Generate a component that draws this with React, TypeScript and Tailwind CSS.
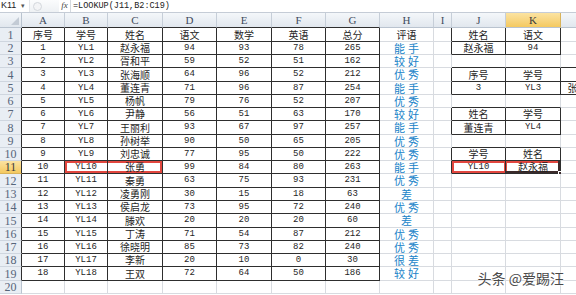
const COLS = ['A', 'B', 'C', 'D', 'E', 'F', 'G', 'H', 'I', 'J', 'K', 'L'];

const WIDTHS = [
  'w-[43px]', 'w-[43px]', 'w-[55px]', 'w-[54px]', 'w-[55px]', 'w-[54px]',
  'w-[54px]', 'w-[54px]', 'w-[18px]', 'w-[54px]', 'w-[55px]', 'w-[44px]',
];

const HEIGHTS = [
  'h-[14px]', 'h-[13px]', 'h-[13px]', 'h-[14px]', 'h-[13px]', 'h-[13px]', 'h-[13px]',
  'h-[14px]', 'h-[13px]', 'h-[13px]', 'h-[13px]', 'h-[14px]', 'h-[13px]', 'h-[13px]',
  'h-[14px]', 'h-[13px]', 'h-[13px]', 'h-[13px]', 'h-[14px]', 'h-[13px]',
];

const ROWS: string[][] = [
  ['序号', '学号', '姓名', '语文', '数学', '英语', '总分', '评语', '', '姓名', '语文', ''],
  ['1', 'YL1', '赵永福', '94', '93', '78', '265', '能手', '', '赵永福', '94', ''],
  ['2', 'YL2', '胥和平', '59', '52', '51', '162', '较好', '', '', '', ''],
  ['3', 'YL3', '张海顺', '64', '96', '52', '212', '优秀', '', '序号', '学号', ''],
  ['4', 'YL4', '董连青', '71', '96', '87', '254', '能手', '', '3', 'YL3', '张海顺'],
  ['5', 'YL5', '杨帆', '79', '76', '52', '207', '优秀', '', '', '', ''],
  ['6', 'YL6', '尹静', '56', '51', '63', '170', '较好', '', '姓名', '学号', ''],
  ['7', 'YL7', '王丽利', '93', '67', '97', '257', '能手', '', '董连青', 'YL4', ''],
  ['8', 'YL8', '孙树举', '90', '50', '65', '205', '优秀', '', '', '', ''],
  ['9', 'YL9', '刘忠诚', '77', '95', '50', '222', '优秀', '', '学号', '姓名', ''],
  ['10', 'YL10', '张勇', '99', '84', '80', '263', '能手', '', 'YL10', '赵永福', ''],
  ['11', 'YL11', '秦勇', '63', '75', '93', '231', '优秀', '', '', '', ''],
  ['12', 'YL12', '凌勇刚', '30', '15', '18', '63', '差', '', '', '', ''],
  ['13', 'YL13', '侯启龙', '73', '95', '72', '240', '优秀', '', '', '', ''],
  ['14', 'YL14', '滕欢', '20', '20', '20', '60', '差', '', '', '', ''],
  ['15', 'YL15', '丁涛', '71', '54', '87', '212', '优秀', '', '', '', ''],
  ['16', 'YL16', '徐晓明', '85', '73', '82', '240', '优秀', '', '', '', ''],
  ['17', 'YL17', '李新', '20', '10', '0', '30', '很差', '', '', '', ''],
  ['18', 'YL18', '王双', '72', '64', '50', '186', '较好', '', '', '', ''],
  ['', '', '', '', '', '', '', '', '', '', '', ''],
];

// r is the 1-based sheet row, c the 0-based column (A = 0)
const bordered = (r: number, c: number) => {
  if (r >= 1 && r <= 19 && c >= 0 && c <= 6) return true;
  if ((r === 1 || r === 2) && (c === 9 || c === 10)) return true;
  if ((r === 4 || r === 5) && c >= 9 && c <= 11) return true;
  if ((r === 7 || r === 8) && (c === 9 || c === 10)) return true;
  if ((r === 10 || r === 11) && (c === 9 || c === 10)) return true;
  return false;
};

const hasCjk = (s: string) => /[\u4e00-\u9fff]/.test(s);

const redBox: Record<string, string> = {
  '11-1': 'shadow-[inset_2px_0_0_#e2473f,inset_0_2px_0_#e2473f,inset_0_-2px_0_#e2473f]',
  '11-2': 'shadow-[inset_-2px_0_0_#e2473f,inset_0_2px_0_#e2473f,inset_0_-2px_0_#e2473f]',
  '11-9': 'shadow-[inset_2px_0_0_#e2473f,inset_0_2px_0_#e2473f,inset_0_-2px_0_#e2473f,inset_-1px_0_0_#e2473f]',
  '11-10': 'shadow-[inset_-2px_0_0_#3b2a2a,inset_0_-2px_0_#3b2a2a,inset_0_2px_0_#e2473f,inset_1px_0_0_#e2473f]',
};

const Cell = ({ r, c, text }: { r: number; c: number; text: string }) => {
  const right = bordered(r, c) || bordered(r, c + 1) ? 'border-r-[#2e2e2e]' : 'border-r-[#d8dbe0]';
  const bottom = bordered(r, c) || bordered(r + 1, c) ? 'border-b-[#2e2e2e]' : 'border-b-[#d8dbe0]';
  const blue = c === 7 && r > 1;
  const font = blue
    ? "font-['Noto_Sans_CJK_SC',sans-serif] text-[11px] tracking-[3px] pl-[3px] text-[#2083c8]"
    : hasCjk(text)
      ? "font-['Noto_Sans_CJK_SC',sans-serif] text-[10px] text-[#1f1f1f]"
      : "font-['Liberation_Mono','Noto_Sans_CJK_SC',monospace] text-[9px] text-[#1f1f1f]";
  return (
    <div
      className={`relative shrink-0 box-border flex items-center justify-center overflow-visible whitespace-nowrap border-r border-b leading-none ${WIDTHS[c]} ${right} ${bottom} ${font} ${redBox[`${r}-${c}`] ?? ''}`}
    >
      {text}
      {r === 11 && c === 10 && (
        <span className="absolute -bottom-[2px] -right-[2px] h-[4px] w-[4px] bg-[#3b2a2a] border border-white" />
      )}
    </div>
  );
};

export default function App() {
  return (
    <div className="relative h-[295px] w-[576px] overflow-hidden bg-white">
      {/* formula bar */}
      <div className="flex h-[13px] items-center border-b border-[#c5ccd6] bg-white">
        <div className="flex h-full w-[21px] items-center pl-[1px] font-['Liberation_Sans',sans-serif] text-[9px] text-[#222]">
          K11
        </div>
        <div className="flex h-full w-[8px] items-center text-[7px] text-[#555]">▾</div>
        <div className="flex h-full w-[30px] items-center border-l border-[#e3e6ea] bg-gradient-to-b from-[#fbfcfd] to-[#eef1f4] pl-[3px]">
          <span className="h-[9px] w-[9px] rounded-full border border-[#d3d7dc] bg-[#f3f4f6]" />
        </div>
        <div className="flex h-full w-[11px] items-center justify-center font-['Liberation_Serif',serif] text-[9px] italic text-[#444]">
          fx
        </div>
        <div className="flex h-full flex-1 items-center border-l border-[#d4d9df] pl-[2px] font-['Liberation_Mono',monospace] text-[8.5px] text-[#222]">
          =LOOKUP(J11,B2:C19)
        </div>
      </div>

      {/* column headers */}
      <div className="flex h-[15px]">
        <div className="relative box-border flex w-[22px] shrink-0 items-end justify-end border-r border-b border-[#b9c3cf] bg-gradient-to-b from-[#f4f7fa] to-[#e1e7ee] p-[2px]">
          <svg width="8" height="8" viewBox="0 0 8 8">
            <polygon points="8,0 8,8 0,8" fill="#c3cbd5" />
          </svg>
        </div>
        {COLS.map((col, c) => (
          <div
            key={col}
            className={`box-border flex shrink-0 items-center justify-center border-r border-b font-['Liberation_Serif',serif] text-[11px] leading-none ${WIDTHS[c]} ${
              c === 10
                ? 'border-r-[#d9b35a] bg-gradient-to-b from-[#fbe3a1] to-[#f4c95f] text-[#3a3a3a]'
                : 'border-r-[#c6ced8] bg-gradient-to-b from-[#f4f7fa] to-[#e1e7ee] text-[#3f4b5c]'
            } ${c <= 6 ? 'border-b-[#2e2e2e]' : 'border-b-[#b9c3cf]'}`}
          >
            {col}
          </div>
        ))}
      </div>

      {/* rows */}
      {ROWS.map((row, i) => {
        const r = i + 1;
        return (
          <div key={r} className={`flex ${HEIGHTS[i]}`}>
            <div
              className={`box-border flex w-[22px] shrink-0 items-center justify-center border-r border-b font-['Liberation_Serif',serif] text-[12px] leading-none ${
                r === 11
                  ? 'border-b-[#d9b35a] bg-gradient-to-b from-[#fbe3a1] to-[#f4c95f] text-[#3a3a3a]'
                  : 'border-b-[#cfd6df] bg-[#e9eef4] text-[#56657a]'
              } ${bordered(r, 0) ? 'border-r-[#2e2e2e]' : 'border-r-[#b9c3cf]'}`}
            >
              {r}
            </div>
            {row.map((text, c) => (
              <Cell key={c} r={r} c={c} text={text} />
            ))}
          </div>
        );
      })}

      {/* watermark */}
      <div className="absolute bottom-[10px] right-[12px] font-['Noto_Sans_CJK_SC',sans-serif] text-[14px] leading-none text-[#4a4a4a] [text-shadow:0_0_2px_#fff,0_0_2px_#fff]">
        头条 @爱踢汪
      </div>
    </div>
  );
}
